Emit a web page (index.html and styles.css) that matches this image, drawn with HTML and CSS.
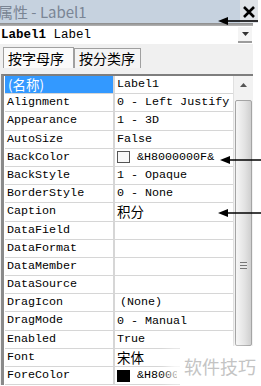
FILE: index.html
```html
<!DOCTYPE html>
<html>
<head>
  <meta charset="UTF-8">
  <link rel="stylesheet" href="styles.css">
</head>
<body>
  <div class="panel">
    <div class="titlebar">
      <span class="title">属性 - Label1</span>
      <span class="close">
        <svg width="14" height="14" viewBox="0 0 14 14"><path d="M2 2 L12 12 M12 2 L2 12" stroke="#000" stroke-width="2.6"/></svg>
      </span>
    </div>
    <div class="title-sep"></div>

    <div class="combo">
      <span class="combo-text"><b>Label1</b> Label</span>
      <span class="combo-btn">
        <svg width="7" height="4" viewBox="0 0 7 4"><path d="M0 0 H7 L3.5 4 Z" fill="#333"/></svg>
      </span>
    </div>

    <div class="tabs">
      <span class="tab active">按字母序</span>
      <span class="tab">按分类序</span>
    </div>

    <div class="grid-wrap">
      <div class="grid">
        <div class="row selected"><span class="name cjk">(名称)</span><span class="value">Label1</span></div>
        <div class="row"><span class="name">Alignment</span><span class="value clip">0 - Left Justify</span></div>
        <div class="row"><span class="name">Appearance</span><span class="value">1 - 3D</span></div>
        <div class="row"><span class="name">AutoSize</span><span class="value">False</span></div>
        <div class="row"><span class="name">BackColor</span><span class="value"><i class="swatch"></i>&amp;H8000000F&amp;</span></div>
        <div class="row"><span class="name">BackStyle</span><span class="value">1 - Opaque</span></div>
        <div class="row"><span class="name">BorderStyle</span><span class="value">0 - None</span></div>
        <div class="row"><span class="name">Caption</span><span class="value cjk">积分</span></div>
        <div class="row"><span class="name">DataField</span><span class="value"></span></div>
        <div class="row"><span class="name">DataFormat</span><span class="value"></span></div>
        <div class="row"><span class="name">DataMember</span><span class="value"></span></div>
        <div class="row"><span class="name">DataSource</span><span class="value"></span></div>
        <div class="row"><span class="name">DragIcon</span><span class="value indent">(None)</span></div>
        <div class="row"><span class="name">DragMode</span><span class="value">0 - Manual</span></div>
        <div class="row"><span class="name">Enabled</span><span class="value">True</span></div>
        <div class="row"><span class="name">Font</span><span class="value cjk">宋体</span></div>
        <div class="row"><span class="name">ForeColor</span><span class="value"><i class="swatch dark"></i><span class="fore-text">&amp;H8000</span></span></div>
      </div>
      <div class="scrollbar">
        <div class="scroll-up">
          <svg width="7" height="4" viewBox="0 0 7 4"><path d="M0 4 H7 L3.5 0 Z" fill="#555"/></svg>
        </div>
        <div class="thumb"><span class="grip"></span></div>
      </div>
    </div>
  </div>

  <!-- pointer arrows drawn over the screenshot -->
  <svg class="pointer p1" width="40" height="10" viewBox="0 0 40 10"><path d="M8 5 H40" stroke="#000" stroke-width="1.6"/><path d="M0 5 L10 1 L10 9 Z" fill="#000"/></svg>
  <svg class="pointer p2" width="41" height="10" viewBox="0 0 41 10"><path d="M8 5 H41" stroke="#000" stroke-width="1.6"/><path d="M0 5 L10 1 L10 9 Z" fill="#000"/></svg>
  <svg class="pointer p3" width="43" height="10" viewBox="0 0 43 10"><path d="M8 5 H43" stroke="#000" stroke-width="1.6"/><path d="M0 5 L10 1 L10 9 Z" fill="#000"/></svg>

  <div class="watermark">软件技巧</div>
</body>
</html>
```

FILE: styles.css
```css
body {
  margin: 0;
  width: 261px;
  height: 386px;
  overflow: hidden;
  position: relative;
  background: #fff;
  font-family: "Liberation Mono", monospace;
  font-size: 11.7px;
  color: #000;
}
.panel {
  width: 253px;
  background: #f0f0f0;
}
.titlebar {
  height: 23px;
  display: flex;
  align-items: center;
  justify-content: space-between;
  background: #c6d2df;
  width: 258px;
}
.title {
  margin-left: -2px;
  font-family: "Noto Sans CJK SC", "Noto Sans", sans-serif;
  font-size: 15px;
  line-height: 20px;
  color: #7a8594;
}
.close {
  width: 18px;
  height: 23px;
  display: flex;
  align-items: center;
  justify-content: center;
  background: #dfe3e8;
}
.title-sep {
  height: 3px;
  background: linear-gradient(#8a8a8a, #b4b4b4);
}
.combo {
  height: 18px;
  display: flex;
  align-items: center;
  justify-content: space-between;
  background: #fff;
}
.combo-text {
  font-size: 12.5px;
  padding-left: 1px;
}
.combo-btn {
  width: 14px;
  height: 16px;
  margin-right: 1px;
  display: flex;
  align-items: center;
  justify-content: center;
  background: #f4f4f4;
  border-bottom: 2px solid #9c9c9c;
  box-sizing: border-box;
}
.tabs {
  height: 30px;
  display: flex;
  align-items: flex-end;
  padding: 0 0 6px 3px;
  box-sizing: border-box;
}
.tab {
  font-family: "Noto Sans CJK SC", sans-serif;
  font-size: 14px;
  line-height: 19px;
  padding: 0 5px 0 4px;
  border: 1px solid #a0a0a0;
  border-bottom: none;
  background: #f4f4f4;
}
.tab.active {
  padding: 1px 9px 0 4px;
  background: #fafafa;
}
.grid-wrap {
  display: flex;
  border-top: 2px solid #7e7e7e;
  border-left: 3px solid #8a8a8a;
  background: #fff;
  margin-left: 1px;
}
.grid {
  width: 229px;
  border-left: 1px solid #fff;
}
.row {
  display: grid;
  grid-template-columns: 110px 1fr;
  height: 18.2px;
  border-bottom: 1px solid #d6d6d6;
  box-sizing: border-box;
  line-height: 17px;
  white-space: nowrap;
}
.name {
  padding-left: 2px;
  border-right: 2px solid #d6d6d6;
}
.value {
  padding-left: 2px;
  display: flex;
  align-items: center;
}
.value.clip {
  overflow: hidden;
}
.value.indent {
  padding-left: 5px;
}
.cjk {
  font-family: "Noto Sans CJK SC", sans-serif;
  font-size: 13.5px;
  line-height: 17px;
}
.selected .name {
  background: #3399ff;
  color: #fff;
  padding-left: 3px;
}
.swatch {
  width: 11px;
  height: 10px;
  border: 1px solid #555;
  background: #f8f8f8;
  margin-right: 7px;
}
.swatch.dark {
  background: #000;
  border-color: #000;
}
.fore-text {
  width: 40px;
  overflow: hidden;
}
.scrollbar {
  width: 19px;
  background: #f2f2f2;
  border-left: 1px solid #e0e0e0;
  display: flex;
  flex-direction: column;
  align-items: center;
}
.scroll-up {
  height: 18px;
  width: 100%;
  display: flex;
  align-items: center;
  justify-content: center;
}
.thumb {
  margin-top: 6px;
  width: 17px;
  height: 246px;
  border: 1px solid #a4a4a4;
  border-radius: 2px;
  background: linear-gradient(to right, #f6f6f6, #e2e2e2 60%, #cfcfcf);
  box-sizing: border-box;
  display: flex;
  align-items: flex-end;
  justify-content: center;
  padding-bottom: 76px;
}
.grip {
  width: 7px;
  height: 7px;
  background: repeating-linear-gradient(#777 0 1px, #e8e8e8 1px 3px);
}
.pointer {
  position: absolute;
}
.p1 { left: 218px; top: 16px; }
.p2 { left: 220px; top: 155px; }
.p3 { left: 218px; top: 208px; }
.watermark {
  position: absolute;
  left: 180px;
  top: 346px;
  width: 81px;
  height: 40px;
  padding-left: 4px;
  box-sizing: border-box;
  background: #fff;
  font-family: "Noto Sans CJK SC", sans-serif;
  font-size: 18px;
  line-height: 40px;
  color: #c4c4c4;
  white-space: nowrap;
  box-shadow: -14px 0 10px -2px rgba(255, 255, 255, 0.8);
}
```
